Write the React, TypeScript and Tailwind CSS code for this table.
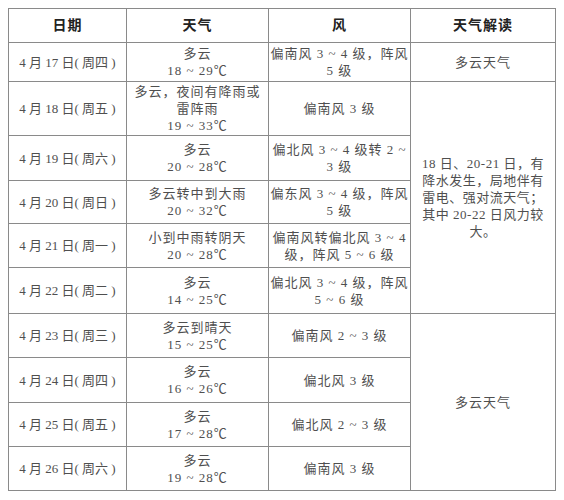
const rows = [
  { date: '4 月 17 日( 周四 )', weather: ['多云', '18 ~ 29℃'], wind: ['偏南风 3 ~ 4 级，阵风', '5 级'] },
  { date: '4 月 18 日( 周五 )', weather: ['多云，夜间有降雨或', '雷阵雨', '19 ~ 33℃'], wind: ['偏南风 3 级'] },
  { date: '4 月 19 日( 周六 )', weather: ['多云', '20 ~ 28℃'], wind: ['偏北风 3 ~ 4 级转 2 ~', '3 级'] },
  { date: '4 月 20 日( 周日 )', weather: ['多云转中到大雨', '20 ~ 32℃'], wind: ['偏东风 3 ~ 4 级，阵风', '5 级'] },
  { date: '4 月 21 日( 周一 )', weather: ['小到中雨转阴天', '20 ~ 28℃'], wind: ['偏南风转偏北风 3 ~ 4', '级，阵风 5 ~ 6 级'] },
  { date: '4 月 22 日( 周二 )', weather: ['多云', '14 ~ 25℃'], wind: ['偏北风 3 ~ 4 级，阵风', '5 ~ 6 级'] },
  { date: '4 月 23 日( 周三 )', weather: ['多云到晴天', '15 ~ 25℃'], wind: ['偏南风 2 ~ 3 级'] },
  { date: '4 月 24 日( 周四 )', weather: ['多云', '16 ~ 26℃'], wind: ['偏北风 3 级'] },
  { date: '4 月 25 日( 周五 )', weather: ['多云', '17 ~ 28℃'], wind: ['偏北风 2 ~ 3 级'] },
  { date: '4 月 26 日( 周六 )', weather: ['多云', '19 ~ 28℃'], wind: ['偏南风 3 级'] },
];

const font = { fontFamily: '"Liberation Serif", "Noto Sans CJK SC", serif' };

function Cell({ lines, className = '' }: { lines: string[]; className?: string }) {
  return (
    <div className={`bg-white flex flex-col items-center justify-center text-center ${className}`}>
      {lines.map((l, i) => (
        <span key={i} className="whitespace-pre">
          {l}
        </span>
      ))}
    </div>
  );
}

export default function App() {
  return (
    <div className="w-[564px] h-[500px] bg-white pt-[8px] pl-[8px]" style={font}>
      <div className="grid grid-cols-[117px_141px_141px_144px] grid-rows-[33px_38px_53px_44px_42px_43px_45px_43px_44px_43px_43px] gap-px bg-[#8a8a8a] border border-[#8a8a8a] w-[548px] text-[13px] leading-[17px] tracking-[1px] text-[#4f4f4f]">
        {/* header */}
        <Cell lines={['日期']} className="font-bold text-[14px] text-[#222]" />
        <Cell lines={['天气']} className="font-bold text-[14px] text-[#222]" />
        <Cell lines={['风']} className="font-bold text-[14px] text-[#222]" />
        <Cell lines={['天气解读']} className="font-bold text-[14px] text-[#222]" />

        {rows.map((r, i) => (
          <div key={i} className="contents">
            <Cell lines={[r.date]} className="tracking-[0px]" />
            <Cell lines={r.weather} />
            <Cell lines={r.wind} />
            {i === 0 && <Cell lines={['多云天气']} />}
            {i === 1 && (
              <Cell
                className="row-span-5 tracking-[0.5px]"
                lines={['18 日、20-21 日，有', '降水发生，局地伴有', '雷电、强对流天气；', '其中 20-22 日风力较', '大。']}
              />
            )}
            {i === 6 && <Cell className="row-span-4" lines={['多云天气']} />}
          </div>
        ))}
      </div>
    </div>
  );
}
